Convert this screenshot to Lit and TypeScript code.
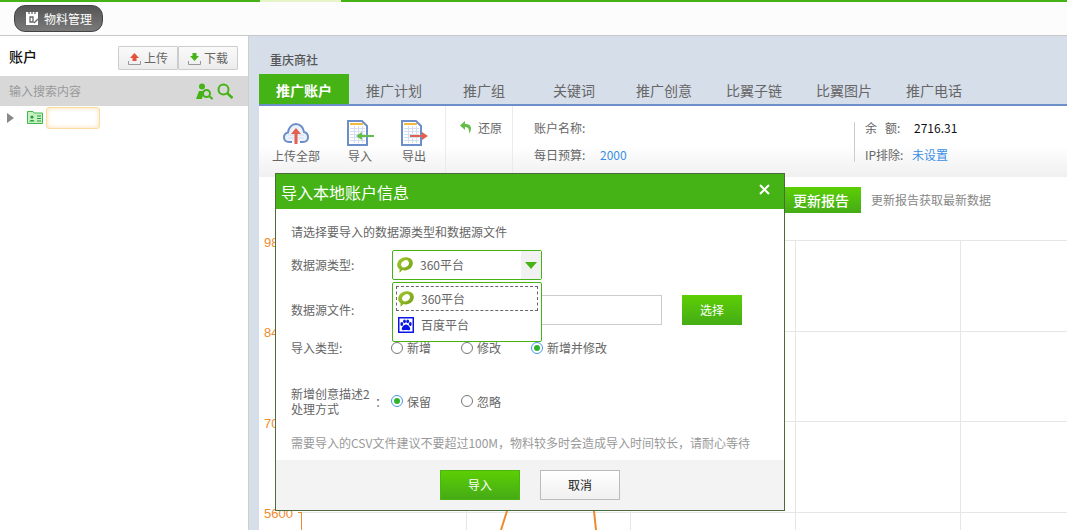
import { LitElement, html, css, svg } from "lit";
import { customElement } from "lit/decorators.js";

const TABS = ["推广账户", "推广计划", "推广组", "关键词", "推广创意", "比翼子链", "比翼图片", "推广电话"];
const GRID_X = [301, 466, 630, 795, 960];
const GRID_Y = [8, 99, 189, 280];
const LABELS: [string, number][] = [["9800", 15], ["8400", 105], ["7000", 196], ["5600", 286]];

const logo360 = html`<svg class="logo" viewBox="0 0 16 16" width="16" height="16">
  <defs><linearGradient id="g360" x1="0" y1="0" x2="1" y2="1"><stop offset="0" stop-color="#a5c92e"/><stop offset="1" stop-color="#6f9e12"/></linearGradient></defs>
  <path d="M8.600 .2C13 .2 16.200 2.600 15.800 6.600 15.400 10.800 11.800 13.400 7.800 13.400 7 13.400 6.200 13.200 5.400 13L2.400 15.800 2.600 12.200C.800 11 0 9.200.2 7.400.6 3.200 4.400.2 8.600.2Z" fill="url(#g360)"/>
  <ellipse cx="8" cy="6.800" rx="4.200" ry="3.200" transform="rotate(-35 8 6.800)" fill="#fff"/>
</svg>`;

const logoBaidu = html`<svg class="logo" viewBox="0 0 16 16" width="16" height="16">
  <rect x=".75" y=".75" width="14.500" height="14.500" fill="#fff" stroke="#0a14e6" stroke-width="1.500"/>
  <g fill="#0a14e6">
    <ellipse cx="3.800" cy="7" rx="1.400" ry="1.900"/><ellipse cx="6.500" cy="4.300" rx="1.400" ry="1.900"/>
    <ellipse cx="9.700" cy="4.300" rx="1.400" ry="1.900"/><ellipse cx="12.300" cy="7" rx="1.400" ry="1.900"/>
    <path d="M8 7.400C10 7.400 12.600 10.400 12.200 12.200 11.800 13.800 9.400 13 8 13 6.600 13 4.200 13.800 3.800 12.200 3.400 10.400 6 7.400 8 7.400Z"/>
  </g>
</svg>`;

const docIcon = (arrow: any) => html`<svg viewBox="0 0 28 26" width="28" height="26">
  <path d="M1 1H15L20 6V25H1Z" fill="#fff" stroke="#6c8ec9" stroke-width="2"/>
  <rect x="3" y="3" width="13" height="2" fill="#f4b942"/>
  <g stroke="#d3deef" stroke-width="1"><path d="M3 8.500H18M3 11.500H18M3 14.500H18M3 17.500H18M3 20.500H18M7.500 6V23M11.500 6V23M15.500 6V23"/></g>
  ${arrow}
</svg>`;

const radio = (label: string, on = false) => html`<label class="radio"><i class="dot ${on ? "on" : ""}"></i>${label}</label>`;

@customElement("dialog-box")
class DialogBox extends LitElement {
  static styles = css`
    :host { display: flex; flex-direction: column; width: 510px; height: 338px; box-sizing: border-box; border: 1px solid #4c6b3c; background: #fff; color: #666; font: 12px/16px "Noto Sans CJK SC", "Liberation Sans", sans-serif; }
    .head { height: 35px; flex: none; background: #45b316; color: #fff; display: flex; align-items: center; justify-content: space-between; padding: 0 14px 0 5px; font-size: 16px; }
    .close { width: 11px; height: 11px; display: block; margin-top: -4px; }
    .body { flex: 1; padding: 15px 15px 0; position: relative; }
    .row { display: flex; align-items: center; }
    .lab { width: 100px; flex: none; }
    .lab.wide { width: 101px; }
    .select { position: relative; width: 150px; height: 30px; box-sizing: border-box; border: 1px solid #45b316; border-radius: 2px; display: flex; align-items: center; padding-left: 4px; gap: 7px; }
    .caret { position: absolute; right: 0; top: 0; bottom: 0; width: 20px; background: #f1f1f1; display: flex; align-items: center; justify-content: center; }
    .caret::after { content: ""; border: 6px solid transparent; border-top: 7px solid #45b316; border-bottom: 0; }
    .menu { position: absolute; left: 116px; top: 73px; width: 150px; height: 60px; box-sizing: border-box; border: 1px solid #45b316; border-radius: 2px; background: #fff; padding: 3px; z-index: 2; }
    .opt { height: 25px; box-sizing: border-box; display: flex; align-items: center; padding-left: 2px; gap: 7px; }
    .opt.focus { border: 1px dashed #666; padding-left: 1px; }
    .opt + .opt { margin-top: 1px; }
    .file { width: 270px; height: 30px; box-sizing: border-box; border: 1px solid #ccc; }
    .pick { width: 60px; height: 30px; margin-left: 20px; background: linear-gradient(#5ccf04, #45ab16); color: #fff; text-align: center; line-height: 30px; }
    .radio { display: inline-flex; align-items: center; width: 70px; gap: 4px; white-space: nowrap; }
    .dot { width: 12px; height: 12px; box-sizing: border-box; border: 1px solid #777; border-radius: 50%; background: #fff; display: flex; align-items: center; justify-content: center; flex: none; }
    .dot.on { border-color: #4a96e8; }
    .dot.on::after { content: ""; width: 6px; height: 6px; border-radius: 50%; background: #2db52d; }
    .intro { margin-bottom: 10px; }
    .r-file { margin-top: 15px; }
    .r-type { margin-top: 15px; height: 16px; }
    .r-keep { margin-top: 30px; line-height: 15px; }
    .two { width: 84px; flex: none; }
    .colon { width: 16px; flex: none; }
    .note { margin-top: 19px; color: #999; white-space: nowrap; }
    .foot { height: 50px; flex: none; background: #f3f3f3; display: flex; justify-content: center; gap: 20px; padding-top: 10px; box-sizing: border-box; }
    .btn { width: 80px; height: 30px; box-sizing: border-box; text-align: center; line-height: 28px; }
    .ok { background: linear-gradient(#5ccf04, #45ab16); color: #fff; border: 1px solid #4bb40f; }
    .cancel { background: linear-gradient(#fff, #f0f0f0); color: #222; border: 1px solid #bbb; }
  `;
  render() {
    return html`
      <div class="head"><span>导入本地账户信息</span>
        <svg class="close" viewBox="0 0 11 11"><path d="M1 1L10 10M10 1L1 10" stroke="#fff" stroke-width="2"/></svg></div>
      <div class="body">
        <div class="intro">请选择要导入的数据源类型和数据源文件</div>
        <div class="row"><span class="lab wide">数据源类型:</span><div class="select">${logo360}<span>360平台</span><span class="caret"></span></div></div>
        <div class="menu">
          <div class="opt focus">${logo360}<span>360平台</span></div>
          <div class="opt">${logoBaidu}<span>百度平台</span></div>
        </div>
        <div class="row r-file"><span class="lab wide">数据源文件:</span><div class="file"></div><div class="pick">选择</div></div>
        <div class="row r-type"><span class="lab">导入类型:</span>${radio("新增")}${radio("修改")}${radio("新增并修改", true)}</div>
        <div class="row r-keep"><span class="two">新增创意描述2<br />处理方式</span><span class="colon">：</span>${radio("保留", true)}${radio("忽略")}</div>
        <div class="note">需要导入的CSV文件建议不要超过100M，物料较多时会造成导入时间较长，请耐心等待</div>
      </div>
      <div class="foot"><div class="btn ok">导入</div><div class="btn cancel">取消</div></div>
    `;
  }
}

@customElement("app-root")
class AppRoot extends LitElement {
  static styles = css`
    :host { display: block; position: relative; width: 1067px; height: 530px; overflow: hidden; background: #fff; color: #666; font: 12px/16px "Noto Sans CJK SC", "Liberation Sans", sans-serif; }
    .top { height: 36px; box-sizing: border-box; border-top: 2px solid #45b316; border-bottom: 1px solid #c8c8c8; background: #fcfcfc; padding: 3px 0 0 14px; position: relative; }
    .glow { position: absolute; left: 260px; top: -2px; width: 81px; height: 2px; background: #e6f5c8; }
    .pill { width: 89px; height: 27px; box-sizing: border-box; border: 1px solid #444; border-radius: 11px; background: linear-gradient(#555, #7a7a7a); color: #fff; display: flex; align-items: center; gap: 4px; padding-left: 10px; }
    .layout { display: flex; height: 494px; }
    .side { width: 248px; flex: none; border-right: 1px solid #ccd0cc; background: #fff; }
    .side-head { height: 40px; display: flex; align-items: center; justify-content: space-between; padding: 0 10px 0 9px; box-sizing: border-box; color: #111; }
    .side-head b { font-weight: 500; font-size: 14px; }
    .btns { display: flex; margin-top: 4px; }
    .sb { width: 60px; height: 24px; box-sizing: border-box; border: 1px solid #ccc; border-radius: 1px; background: linear-gradient(#fafafa, #ececec); color: #666; display: flex; align-items: center; justify-content: center; gap: 3px; }
    .search { height: 30px; background: #d8d8d8; display: flex; align-items: center; padding: 0 15px 0 9px; color: #999; }
    .search span { flex: 1; }
    .search svg { margin-left: 4px; }
    .tree { display: flex; align-items: center; height: 23px; padding-left: 7px; }
    .tri { border: 5px solid transparent; border-left: 7px solid #888; border-right: 0; }
    .tree svg { margin-left: 13px; }
    .name { width: 54px; height: 22px; box-sizing: border-box; margin-left: 3px; border: 1px solid #fbdca0; border-radius: 3px; box-shadow: inset 0 0 5px #fbdfae; }
    .main { flex: 1; min-width: 0; padding-left: 10px; background: #d6deea; }
    .shop { height: 38px; padding: 16px 0 0 11px; box-sizing: border-box; font-weight: 500; color: #555; }
    .tabs { display: flex; height: 30px; border-bottom: 2px solid #6c8ec9; }
    .tab { width: 90px; text-align: center; font-size: 14px; line-height: 32px; color: #666; }
    .tab.on { background: #45b316; color: #fff; font-weight: 700; }
    .content { background: #fff; height: 424px; }
    .tools { display: flex; height: 71px; background: linear-gradient(#fff 55%, #f0f0f0); }
    .g1 { display: flex; width: 187px; padding-left: 10px; box-sizing: border-box; border-right: 1px solid #ebebeb; }
    .tool { width: 54px; padding-top: 14px; display: flex; flex-direction: column; align-items: center; flex: none; }
    .tool:first-child { margin-right: 10px; }
    .tool svg { display: block; margin-bottom: 2px; }
    .tool.doc svg { margin-left: 2px; }
    .g2 { width: 67px; padding: 14px 0 0 13px; box-sizing: border-box; border-right: 1px solid #ebebeb; display: flex; align-items: flex-start; gap: 5px; }
    .g3 { flex: none; width: 341px; padding: 8px 0 0 21px; box-sizing: border-box; }
    .g4 { margin-top: 16px; height: 40px; border-left: 1px solid #ccc; padding-left: 10px; }
    .info { height: 27px; display: flex; align-items: center; }
    .g4 .info { height: 27px; transform: translateY(-8px); }
    .k { width: 66px; }
    .k2 { width: 49px; }
    .k3 { width: 47px; }
    .blue { color: #3a8ee6; }
    .black { color: #111; }
    .report { display: flex; align-items: flex-start; height: 55px; padding: 10px 0 0 522px; box-sizing: border-box; }
    .rb { width: 80px; height: 26px; background: linear-gradient(#5ccf04, #45ab16); color: #fff; text-align: center; line-height: 26px; font-size: 14px; font-weight: 500; }
    .rt { margin-left: 10px; color: #888; line-height: 26px; }
    .chart { display: block; }
    dialog-box { position: absolute; left: 275px; top: 173px; z-index: 5; }
  `;
  chart() {
    return html`<svg class="chart" width="808" height="298" viewBox="259 0 808 298">
      ${GRID_Y.map((y) => svg`<line x1="301" x2="1067" y1="${y + 0.5}" y2="${y + 0.5}" stroke="#e6e6e6"/>`)}
      ${GRID_X.slice(1).map((x) => svg`<line x1="${x + 0.5}" x2="${x + 0.5}" y1="8" y2="298" stroke="#e6e6e6"/>`)}
      <path d="M301.5 280V298M298 280.5H301" stroke="#f08a2c" fill="none"/>
      ${LABELS.map(([t, y]) => svg`<text x="264" y="${y}" fill="#f08a2c" font-size="13" font-family="Liberation Sans">${t}</text>`)}
      <path d="M507 279L501 298M594 279L596 298" stroke="#f08a2c" stroke-width="2" fill="none"/>
    </svg>`;
  }
  render() {
    return html`
      <div class="top"><i class="glow"></i>
        <div class="pill">
          <svg viewBox="0 0 15 15" width="15" height="15"><path d="M1 1H13V14H1Z" fill="#fff"/><path d="M4 1V3M7 1V3M10 1V3M5 6H8V11H5ZM9 12L13 8" stroke="#666" stroke-width="1.300" fill="none"/></svg>
          <span>物料管理</span>
        </div>
      </div>
      <div class="layout">
        <aside class="side">
          <div class="side-head"><b>账户</b>
            <div class="btns">
              <div class="sb"><svg viewBox="0 0 13 13" width="13" height="13"><path d="M6.500 1L11 6H8.500V9H4.500V6H2Z" fill="#e2533f"/><path d="M.5 9V12.500H12.500V9" stroke="#999" fill="none"/></svg>上传</div>
              <div class="sb"><svg viewBox="0 0 13 13" width="13" height="13"><path d="M4.500 1H8.500V4H11L6.500 9 2 4H4.500Z" fill="#45b316"/><path d="M.5 9V12.500H12.500V9" stroke="#999" fill="none"/></svg>下载</div>
            </div>
          </div>
          <div class="search"><span>输入搜索内容</span>
            <svg viewBox="0 0 17 17" width="17" height="17"><circle cx="6" cy="3.500" r="3" fill="#45b316"/><path d="M0 16L3 8H8L6 16Z" fill="#45b316"/><circle cx="10.500" cy="10.500" r="3.500" fill="#d8d8d8" stroke="#45b316" stroke-width="2"/><path d="M13 13L16.500 16" stroke="#45b316" stroke-width="2"/></svg>
            <svg viewBox="0 0 16 16" width="16" height="16"><circle cx="6.500" cy="6.500" r="5" fill="none" stroke="#45b316" stroke-width="2"/><path d="M10 10L15.500 15" stroke="#45b316" stroke-width="2.400"/></svg>
          </div>
          <div class="tree"><i class="tri"></i>
            <svg viewBox="0 0 16 13" width="16" height="13"><path d="M.5 .5H6L7 2H15.500V12.500H.5Z" fill="#c8f0c4" stroke="#3fb84a"/><circle cx="5" cy="6" r="1.600" fill="#1f9e35"/><path d="M2.500 10.500C2.500 8.500 7.500 8.500 7.500 10.500Z" fill="#1f9e35"/><path d="M10 5H14M10 7.500H14M10 10H14" stroke="#1f9e35"/></svg>
            <div class="name"></div>
          </div>
        </aside>
        <main class="main">
          <div class="shop">重庆商社</div>
          <div class="tabs">${TABS.map((t, i) => html`<div class="tab ${i === 0 ? "on" : ""}">${t}</div>`)}</div>
          <div class="content">
            <div class="tools">
              <div class="g1">
                <div class="tool">
                  <svg viewBox="0 0 28 26" width="28" height="26"><path d="M10 22H7C3.500 22 2 19.500 2 17.500 2 15 3.500 13 6 12.500 6.500 7.500 10 4 14 4 18 4 21.500 7.500 22 12 24.500 12.500 26 15 26 17.500 26 19.500 24.500 22 21 22H18" fill="#eef2fa" stroke="#6c8ec9" stroke-width="2"/><path d="M6 15H22M6 18H22" stroke="#d3deef"/><path d="M14 8L19 14H15.500V24H12.500V14H9Z" fill="#e2604f"/></svg>
                  <span>上传全部</span>
                </div>
                <div class="tool doc">${docIcon(svg`<path d="M14 15H27V17H14Z" fill="#65bd4a"/><path d="M9 16L15 12V20Z" fill="#65bd4a"/>`)}<span>导入</span></div>
                <div class="tool doc">${docIcon(svg`<path d="M9 15H22V17H9Z" fill="#e2604f"/><path d="M27 16L21 12V20Z" fill="#e2604f"/>`)}<span>导出</span></div>
              </div>
              <div class="g2">
                <svg viewBox="0 0 14 15" width="14" height="15"><path d="M6 1L1 5.500 6 10V7C9 7 10.500 9 10 13.500 13 10.500 13.500 3.500 6 4Z" fill="#65bd4a"/></svg>
                <span>还原</span>
              </div>
              <div class="g3">
                <div class="info"><span class="k">账户名称:</span></div>
                <div class="info"><span class="k">每日预算:</span><span class="blue">2000</span></div>
              </div>
              <div class="g4">
                <div class="info"><span class="k2">余&nbsp;&nbsp;&nbsp;额:</span><span class="black">2716.31</span></div>
                <div class="info"><span class="k3">IP排除:</span><span class="blue">未设置</span></div>
              </div>
            </div>
            <div class="report"><div class="rb">更新报告</div><div class="rt">更新报告获取最新数据</div></div>
            ${this.chart()}
          </div>
        </main>
      </div>
      <dialog-box></dialog-box>
    `;
  }
}
